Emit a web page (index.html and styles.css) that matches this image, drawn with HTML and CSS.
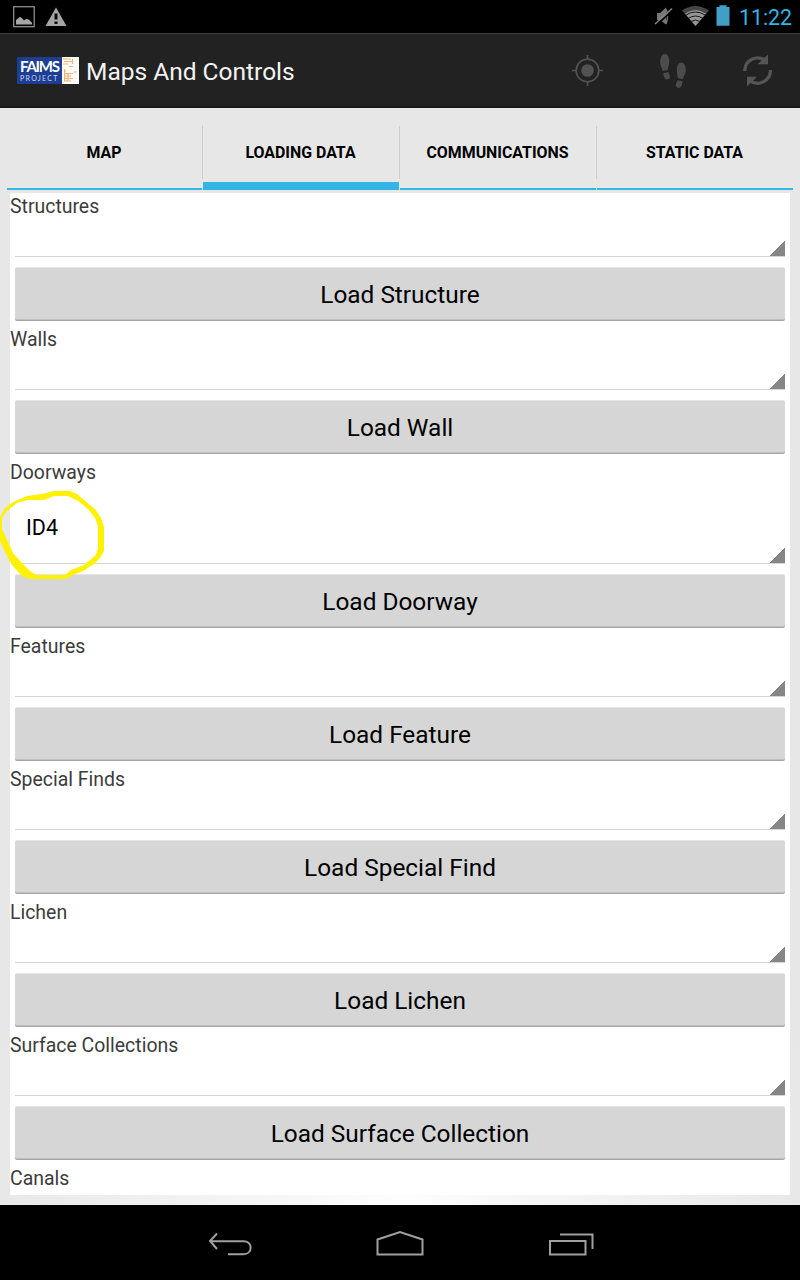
FILE: index.html
```html
<!DOCTYPE html>
<html lang="en">
<head>
<meta charset="utf-8">
<title>Maps And Controls</title>
<link rel="stylesheet" href="styles.css">
</head>
<body>
<div class="screen">
  <header class="status">
    <svg class="status-left" width="80" height="33" viewBox="0 0 80 33">
      <rect x="13.7" y="6.7" width="20.5" height="20" fill="none" stroke="#8e8e8e" stroke-width="1.3"/>
      <path d="M16 24.5V20l2-1.5 2-1.8 2 1.6 2 2.2 2.5-1.8 2.5 1 3 3v1.800z" fill="#a6a6a6"/>
      <path d="M56 7.500L66.500 26H45.500z" fill="#a6a6a6"/>
      <path d="M54.500 13.500h3v6h-3zM54.500 21.500h3v2.500h-3z" fill="#0a0a0a"/>
    </svg>
    <svg class="status-right" width="85" height="33" viewBox="650 0 85 33">
      <path d="M657 13h3l6-5.500v17L660 20h-3z" fill="#777"/>
      <path d="M666 9q3 7 0 15" fill="none" stroke="#777" stroke-width="1.500"/>
      <path d="M655.800 25.600L672.800 10.100" stroke="#000" stroke-width="1.800"/>
      <path d="M655 24L672 8.500" stroke="#888" stroke-width="1.400"/>
      <path d="M682 10.500Q695.500 1.500 709 10.500L695.500 26z" fill="#454545"/>
      <path d="M685 13.500Q695.500 6.500 706 13.500L695.500 26z" fill="#969696"/>
      <path d="M685 15.500q10.500-7 21 0M688 18.500q7.500-5 15 0M691 21.500q4.500-3 9 0" fill="none" stroke="#151515" stroke-width="1"/>
      <path d="M716.500 7h3V5.300h7V7h3v18.800h-13z" fill="#419fc6"/>
    </svg>
    <span class="clock">11:22</span>
  </header>
  <div class="actionbar">
    <div class="logo">
      <div class="logo-name"><span class="logo-top">FAIMS</span><span class="logo-bottom">PROJECT</span></div>
      <svg width="17" height="27" viewBox="0 0 17 27"><rect width="17" height="27" fill="#fff"/><path d="M1 2h8M2 4.500h8M1 7h5M7 9.500h4M10.500 2v5M2 14h2M2 16.500h9M2 19h7M2 21.500h9M2 24h7M2.500 12v12M6 16v8M11.500 15h3.500" fill="none" stroke="#f6b26b" stroke-width="1.200"/></svg>
    </div>
    <h1 class="title">Maps And Controls</h1>
    <svg class="actions" width="240" height="74" viewBox="560 34 240 74">
      <g fill="none" stroke="#525252" stroke-width="1.700"><circle cx="587.500" cy="70.500" r="11.300"/><path d="M587.500 55v5M587.500 81v5M572 70.500h5M598 70.500h5"/></g>
      <circle cx="587.500" cy="70.500" r="6.300" fill="#525252"/>
      <g fill="#4c4c4c">
        <path d="M660.200 62c0-5 2-8 4.800-8s4.200 3 4.200 7.500c0 3-1.200 5.500-1.500 8.500l-5 1c-.5-3-2.500-5-2.500-9z"/>
        <path d="M663.200 73.200l5-1.200c.8 2 1.800 3 1.800 4.800 0 1.500-1 2.500-2.700 2.500-2.500 0-3.500-2.500-4.100-6.100z"/>
        <path d="M685.800 70.500c0-5-1.800-8-4.500-8s-4.500 3-4.500 7.500c0 3 .8 5.500 1 8l5 1.200c.5-3 3-5 3-8.700z"/>
        <path d="M682.500 81.200l-5-1c-.5 2-1.800 3-1.800 4.800 0 1.500 1.200 2.800 3 2.800 2.500 0 3.500-3 3.800-6.600z"/>
      </g>
      <g fill="none" stroke="#555" stroke-width="3.300"><path d="M744.800 71a12.800 12.800 0 0 1 20.800-10.200"/><path d="M770.400 70a12.800 12.800 0 0 1-20.800 10.400"/></g>
      <path d="M768 54.500v9.800h-10.500zM747 86.500v-9.800h10z" fill="#555"/>
    </svg>
  </div>
  <main class="page">
    <nav class="tabs">
      <div class="tab"><span>MAP</span></div>
      <div class="tab active"><span>LOADING DATA</span></div>
      <div class="tab"><span>COMMUNICATIONS</span></div>
      <div class="tab"><span>STATIC DATA</span></div>
    </nav>
    <div class="content">
      <section class="group"><div class="label"><span>Structures</span></div><div class="spinner"></div><div class="button"><span>Load Structure</span></div></section>
      <section class="group"><div class="label"><span>Walls</span></div><div class="spinner"></div><div class="button"><span>Load Wall</span></div></section>
      <section class="group"><div class="label"><span>Doorways</span></div><div class="spinner filled"><span>ID4</span></div><div class="button"><span>Load Doorway</span></div></section>
      <section class="group"><div class="label"><span>Features</span></div><div class="spinner"></div><div class="button"><span>Load Feature</span></div></section>
      <section class="group"><div class="label"><span>Special Finds</span></div><div class="spinner"></div><div class="button"><span>Load Special Find</span></div></section>
      <section class="group"><div class="label"><span>Lichen</span></div><div class="spinner"></div><div class="button"><span>Load Lichen</span></div></section>
      <section class="group"><div class="label"><span>Surface Collections</span></div><div class="spinner"></div><div class="button"><span>Load Surface Collection</span></div></section>
      <div class="label"><span>Canals</span></div>
    </div>
  </main>
  <footer class="navbar">
    <svg width="400" height="75" viewBox="200 1205 400 75" fill="none" stroke="#a0a0a0" stroke-width="2">
      <path d="M217 1233.500l-7 7.500 7 8M211 1241.200h32.500c9.500 0 9.500 13 0 13H228"/>
      <path d="M377.500 1254.500v-15l22.500-7.500 22.500 7.500v15z"/>
      <path d="M550 1241h35.500v13.500H550zM560 1234.500h32.500v14.500"/>
    </svg>
  </footer>
  <svg class="marker" width="106" height="92" viewBox="0 488 106 92">
    <path fill="#fff200" fill-rule="evenodd" d="M0 517L5 508 13 502 27 496 42 494 54 491H70L77 494 84 500 95 509 101 518 104 527V551L100 558 94 564 83 571 73 575 66 579H29L22 576 12 565 5 552 0 541zM2 518V529L8 542 13 553 21 562 30 571 36 575H65L71 570 84 565 96 555 98 548V526L95 518 88 509 78 501 68 496H54L44 500H28L17 503 7 511z"/>
  </svg>
</div>
</body>
</html>
```
FILE: styles.css
```css
* { box-sizing: border-box; }
body { margin: 0; font-family: Roboto, "Liberation Sans", sans-serif; }
svg { display: block; flex: none; }
.screen { position: relative; width: 800px; height: 1280px; overflow: hidden; display: flex; flex-direction: column; background: #000; }
.status { height: 33px; display: flex; background: #000; }
.status-right { margin-left: auto; }
.clock { width: 65px; padding-left: 4px; font-size: 21.300px; line-height: 35px; color: #33b5e5; }
.actionbar { height: 75px; display: flex; align-items: flex-start; background: #222; border-top: 1px solid #3b3b3b; box-shadow: inset 0 -2px #191919; }
.logo { display: flex; width: 62px; height: 27px; margin: 23px 0 0 17px; background: #1c3f94; }
.logo-name { width: 45px; display: flex; flex-direction: column; color: #fff; padding-left: 3px; white-space: nowrap; }
.logo-top { font: bold 15px/18px Lato, sans-serif; letter-spacing: -1.200px; }
.logo-bottom { font: 7px/6px Lato, sans-serif; letter-spacing: 1.300px; color: #ccd5ed; }
.title { margin: 23px auto 0 7px; font-size: 24.500px; line-height: 30px; font-weight: 400; color: #f3f3f3; white-space: nowrap; }
.page { height: 1097px; background: radial-gradient(ellipse 420px 600px at 50% 100%, #fdfdfd, #e7e7e7); }
.tabs { height: 82px; margin: 0 7px; display: grid; grid-template-columns: 195px 196px 196px 196px; gap: 1px; }
.tab { position: relative; display: flex; align-items: center; justify-content: center; padding: 9px 1px 0 0; border-bottom: 2px solid #33b5e5; font-size: 15.900px; font-weight: 700; color: #000; white-space: nowrap; }
.tab.active { border-bottom-width: 8px; padding-top: 15px; }
.tab + .tab::before { content: ""; position: absolute; left: -1px; top: 18px; width: 1px; height: 53px; background: #cdcdcd; }
.content { height: 1002px; margin: 3px 10px 0; background: #fff; overflow: hidden; }
.group { display: flex; flex-direction: column; }
.label { height: 27px; line-height: 28px; font-size: 19.450px; color: #3c3c3c; white-space: nowrap; }
.spinner { height: 37px; margin: 0 5px 10px; border-bottom: 1px solid #d5d5d5; background: linear-gradient(135deg, transparent 50%, #868686 51%) right bottom / 16px 16px no-repeat; }
.filled { height: 78px; padding: 29px 0 0 11px; font-size: 21.500px; line-height: 26px; color: #000; }
.button { height: 54px; margin: 0 5px 5px; border-radius: 2px; background: #d6d6d6; border-top: 1px solid #e5e5e5; border-bottom: 1px solid #a5a5a5; box-shadow: inset 0 -1px #c0c0c0; text-align: center; font-size: 24.400px; line-height: 54px; color: #000; white-space: nowrap; }
.navbar { height: 75px; display: flex; justify-content: center; }
.marker { position: absolute; left: 0; top: 488px; }
```
